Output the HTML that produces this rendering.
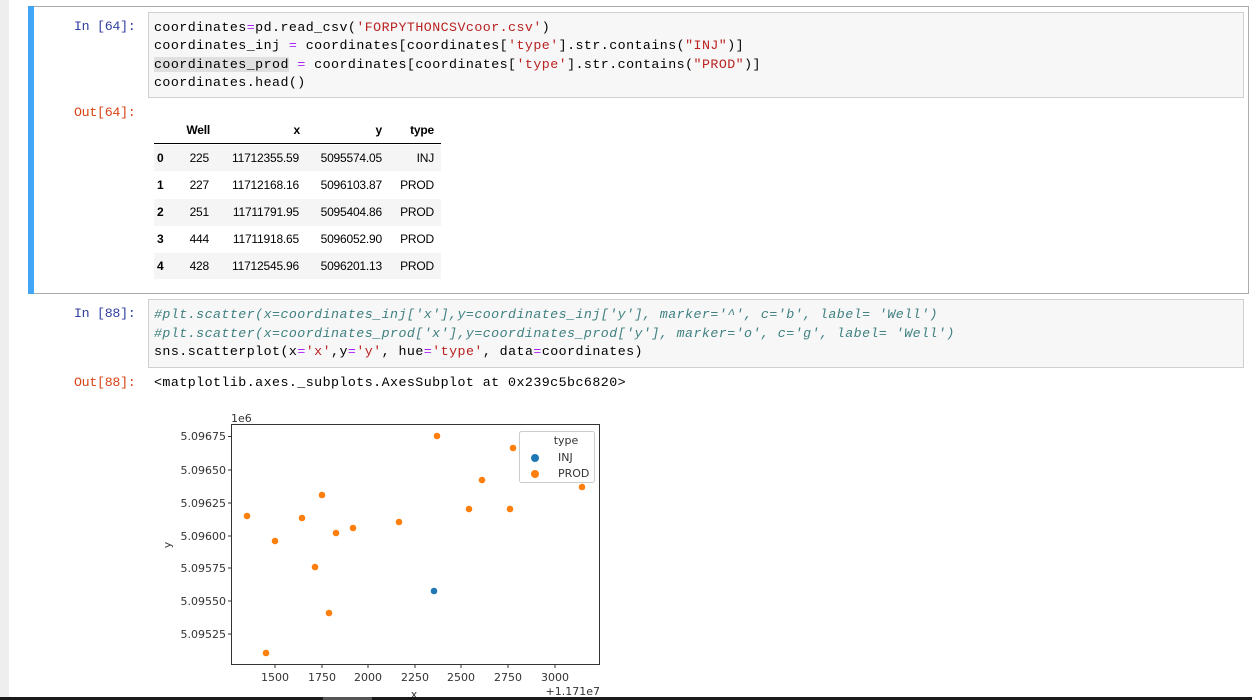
<!DOCTYPE html>
<html><head><meta charset="utf-8"><style>
body{margin:0;width:1252px;height:700px;overflow:hidden;background:#fff;position:relative;font-family:"Liberation Sans",sans-serif}
.a{position:absolute;white-space:pre}
.mono{font-family:"Liberation Mono",monospace;font-size:13.3px;letter-spacing:0.45px}
.pr{color:#303f9f}.po{color:#d84315}
.s{color:#ba2121}.o{color:#aa22ff}.c{color:#408080;font-style:italic}
.t{font-size:12px;color:#000;letter-spacing:-0.2px}
.b{font-weight:bold}
</style></head><body>
<div class="a" style="left:0;top:0;width:9px;height:700px;background:#eeeeee"></div>
<div class="a" style="left:28px;top:6px;width:1220px;height:286px;border:1px solid #ababab;border-left:none"></div>
<div class="a" style="left:28px;top:6px;width:6px;height:288px;background:#42a5f5"></div>
<div class="a" style="left:148px;top:12px;width:1094px;height:84px;background:#f7f7f7;border:1px solid #cfcfcf"></div>
<div class="a mono pr" style="left:74px;top:19px;letter-spacing:-0.3px">In [64]:</div>
<div class="a mono" style="left:154px;top:19px;line-height:18.3px">coordinates<span class="o">=</span>pd.read_csv(<span class="s">'FORPYTHONCSVcoor.csv'</span>)
coordinates_inj <span class="o">=</span> coordinates[coordinates[<span class="s">'type'</span>].str.contains(<span class="s">"INJ"</span>)]
<span style="background:#e0e0e0">coordinates_prod</span> <span class="o">=</span> coordinates[coordinates[<span class="s">'type'</span>].str.contains(<span class="s">"PROD"</span>)]
coordinates.head()</div>
<div class="a mono po" style="left:74px;top:105px;letter-spacing:-0.3px">Out[64]:</div>
<div class="a" style="left:154px;top:143px;width:287px;height:1px;background:#000"></div>
<div class="a" style="left:154px;top:145px;width:287px;height:26px;background:#f5f5f5"></div>
<div class="a" style="left:154px;top:199px;width:287px;height:27px;background:#f5f5f5"></div>
<div class="a" style="left:154px;top:253px;width:287px;height:26px;background:#f5f5f5"></div>
<div class="t">
<div class="a b" style="left:180px;top:123px;width:30px;text-align:right">Well</div>
<div class="a b" style="left:280px;top:123px;width:20px;text-align:right">x</div>
<div class="a b" style="left:360px;top:123px;width:22px;text-align:right">y</div>
<div class="a b" style="left:400px;top:123px;width:34px;text-align:right">type</div>
</div>
<div class="t">
<div class="a b" style="left:157px;top:151px">0</div><div class="a" style="left:180px;top:151px;width:29px;text-align:right">225</div><div class="a" style="left:200px;top:151px;width:99px;text-align:right">11712355.59</div><div class="a" style="left:300px;top:151px;width:82px;text-align:right">5095574.05</div><div class="a" style="left:390px;top:151px;width:44px;text-align:right">INJ</div>
<div class="a b" style="left:157px;top:178px">1</div><div class="a" style="left:180px;top:178px;width:29px;text-align:right">227</div><div class="a" style="left:200px;top:178px;width:99px;text-align:right">11712168.16</div><div class="a" style="left:300px;top:178px;width:82px;text-align:right">5096103.87</div><div class="a" style="left:390px;top:178px;width:44px;text-align:right">PROD</div>
<div class="a b" style="left:157px;top:205px">2</div><div class="a" style="left:180px;top:205px;width:29px;text-align:right">251</div><div class="a" style="left:200px;top:205px;width:99px;text-align:right">11711791.95</div><div class="a" style="left:300px;top:205px;width:82px;text-align:right">5095404.86</div><div class="a" style="left:390px;top:205px;width:44px;text-align:right">PROD</div>
<div class="a b" style="left:157px;top:232px">3</div><div class="a" style="left:180px;top:232px;width:29px;text-align:right">444</div><div class="a" style="left:200px;top:232px;width:99px;text-align:right">11711918.65</div><div class="a" style="left:300px;top:232px;width:82px;text-align:right">5096052.90</div><div class="a" style="left:390px;top:232px;width:44px;text-align:right">PROD</div>
<div class="a b" style="left:157px;top:259px">4</div><div class="a" style="left:180px;top:259px;width:29px;text-align:right">428</div><div class="a" style="left:200px;top:259px;width:99px;text-align:right">11712545.96</div><div class="a" style="left:300px;top:259px;width:82px;text-align:right">5096201.13</div><div class="a" style="left:390px;top:259px;width:44px;text-align:right">PROD</div>
</div>
<div class="a" style="left:148px;top:299px;width:1094px;height:67px;background:#f7f7f7;border:1px solid #cfcfcf"></div>
<div class="a mono pr" style="left:74px;top:306px;letter-spacing:-0.3px">In [88]:</div>
<div class="a mono" style="left:154px;top:306px;line-height:18.5px"><span class="c">#plt.scatter(x=coordinates_inj['x'],y=coordinates_inj['y'], marker='^', c='b', label= 'Well')</span>
<span class="c">#plt.scatter(x=coordinates_prod['x'],y=coordinates_prod['y'], marker='o', c='g', label= 'Well')</span>
sns.scatterplot(x<span class="o">=</span><span class="s">'x'</span>,y<span class="o">=</span><span class="s">'y'</span>, hue<span class="o">=</span><span class="s">'type'</span>, data<span class="o">=</span>coordinates)</div>
<div class="a mono po" style="left:74px;top:375px;letter-spacing:-0.3px">Out[88]:</div>
<div class="a mono" style="left:154px;top:375px">&lt;matplotlib.axes._subplots.AxesSubplot at 0x239c5bc6820&gt;</div>
<svg class="a" style="left:0;top:0" width="1252" height="700" font-family="DejaVu Sans, sans-serif" font-size="11" fill="#333">
<rect x="231.5" y="424.5" width="368" height="240" fill="none" stroke="#333" stroke-width="1"/>
<text x="231" y="422">1e6</text>
<g text-anchor="end">
<text x="226" y="440">5.09675</text><text x="226" y="474">5.09650</text><text x="226" y="507">5.09625</text><text x="226" y="540">5.09600</text><text x="226" y="572">5.09575</text><text x="226" y="605">5.09550</text><text x="226" y="638">5.09525</text>
</g>
<g stroke="#333"><line x1="228" x2="231" y1="436.5" y2="436.5"/><line x1="228" x2="231" y1="470" y2="470"/><line x1="228" x2="231" y1="503" y2="503"/><line x1="228" x2="231" y1="536" y2="536"/><line x1="228" x2="231" y1="568" y2="568"/><line x1="228" x2="231" y1="601" y2="601"/><line x1="228" x2="231" y1="634" y2="634"/>
<line y1="665" y2="668" x1="275" x2="275"/><line y1="665" y2="668" x1="322" x2="322"/><line y1="665" y2="668" x1="368" x2="368"/><line y1="665" y2="668" x1="415" x2="415"/><line y1="665" y2="668" x1="461" x2="461"/><line y1="665" y2="668" x1="508" x2="508"/><line y1="665" y2="668" x1="555" x2="555"/></g>
<g text-anchor="middle"><text x="275" y="681">1500</text><text x="322" y="681">1750</text><text x="368" y="681">2000</text><text x="415" y="681">2250</text><text x="461" y="681">2500</text><text x="508" y="681">2750</text><text x="555" y="681">3000</text><text x="414" y="698">x</text></g>
<text x="600" y="695" text-anchor="end">+1.171e7</text>
<text x="0" y="0" transform="translate(171,545) rotate(-90)" text-anchor="middle">y</text>
<g fill="#ff7f0e" stroke="#fff" stroke-width="0.6">
<circle cx="437" cy="436" r="3.6"/><circle cx="513" cy="448" r="3.6"/><circle cx="482" cy="480" r="3.6"/><circle cx="582" cy="487" r="3.6"/><circle cx="322" cy="495" r="3.6"/><circle cx="469" cy="509" r="3.6"/><circle cx="510" cy="509" r="3.6"/><circle cx="247" cy="516" r="3.6"/><circle cx="302" cy="518" r="3.6"/><circle cx="399" cy="522" r="3.6"/><circle cx="353" cy="528" r="3.6"/><circle cx="336" cy="533" r="3.6"/><circle cx="275" cy="541" r="3.6"/><circle cx="315" cy="567" r="3.6"/><circle cx="329" cy="613" r="3.6"/><circle cx="266" cy="653" r="3.6"/>
</g>
<circle cx="434" cy="591" r="3.6" fill="#1f77b4" stroke="#fff" stroke-width="0.6"/>
<rect x="519.5" y="431.5" width="75" height="51" rx="2" fill="#fff" fill-opacity="0.8" stroke="#ccc"/>
<text x="566" y="444" text-anchor="middle">type</text>
<circle cx="535" cy="458" r="4" fill="#1f77b4"/><text x="558" y="461">INJ</text>
<circle cx="535" cy="474" r="4" fill="#ff7f0e"/><text x="558" y="477">PROD</text>
</svg>
<div class="a" style="left:0;top:697px;width:1252px;height:3px;background:#1a1a1a"></div>
<div class="a" style="left:323px;top:697px;width:49px;height:3px;background:#555"></div>
</body></html>
